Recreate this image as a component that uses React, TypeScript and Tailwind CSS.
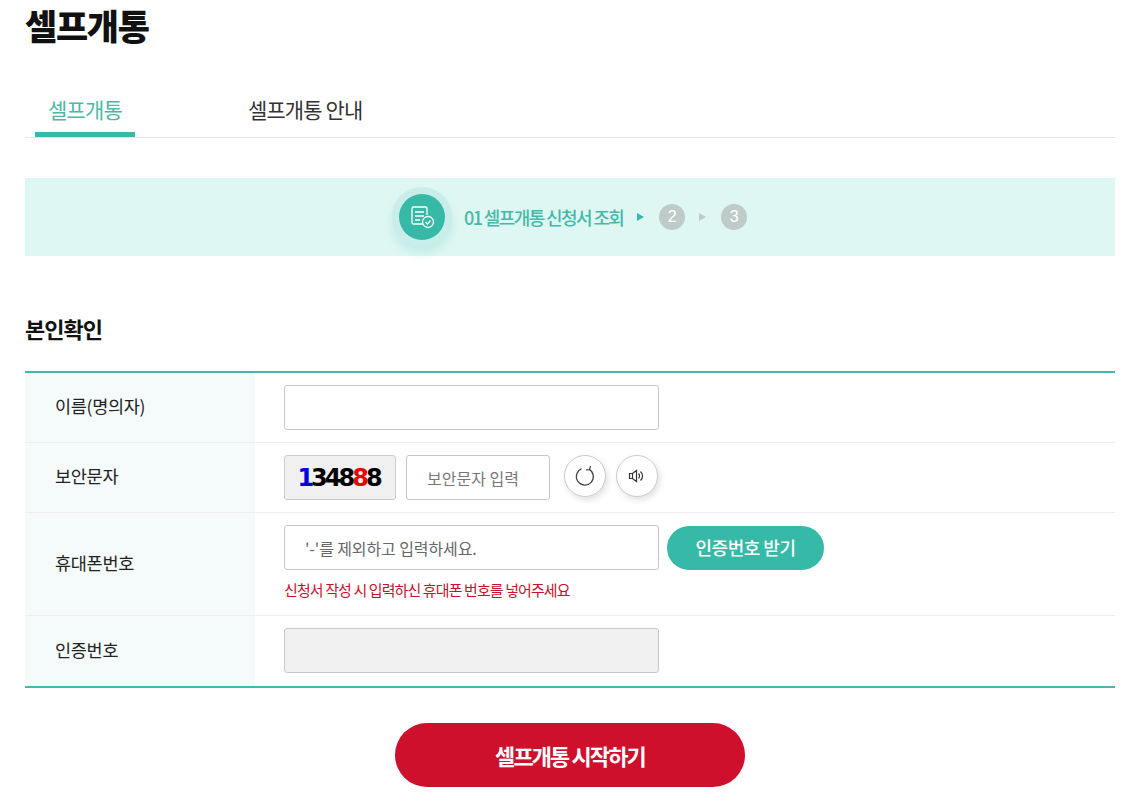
const font = { fontFamily: '"Noto Sans CJK KR", "Noto Sans", sans-serif' };

function Label({ text }: { text: string }) {
  return (
    <div className="w-[230px] shrink-0 bg-[#f5fbfa] pl-[30px] pb-[2px] flex items-center text-[17.5px] tracking-[-0.3px] text-[#222222]">
      {text}
    </div>
  );
}

function Row({ label, className = "", children }: { label: string; className?: string; children: React.ReactNode }) {
  return (
    <div className={`flex border-b border-[#eeeeee] ${className}`}>
      <Label text={label} />
      <div className="pl-[29px] pt-[12px] flex-1">{children}</div>
    </div>
  );
}

export default function App() {
  return (
    <div className="w-[1132px] h-[806px] overflow-hidden bg-white px-[25px] pr-[17px]" style={font}>
      <h1 className="h-[50px] text-[35px] leading-[50px] font-black tracking-[-1.3px] text-[#111111]">셀프개통</h1>

      {/* Tabs */}
      <div className="mt-[37px] h-[51px] flex border-b border-[#e5e5e5]">
        <div className="ml-[10px] w-[100px] h-[50px] border-b-[5px] border-[#36b9a6] text-center text-[21px] leading-[45px] tracking-[-0.8px] text-[#4cb8a6]">
          셀프개통
        </div>
        <div className="ml-[113px] text-[21px] leading-[45px] tracking-[-0.9px] text-[#333333]">셀프개통 안내</div>
      </div>

      {/* Steps */}
      <div className="mt-[40px] h-[78px] bg-[#dff7f3] flex items-center pl-[374px]">
        <div className="w-[46px] h-[46px] rounded-full bg-[#36b9a6] flex items-center justify-center shadow-[0_0_0_7px_#c9eee9,0_6px_10px_7px_rgba(54,185,166,0.18)]">
          <svg width="28" height="24" viewBox="0 0 28 24" fill="none" stroke="white" strokeWidth="1.3">
            <path d="M15 19H5.500A1.500 1.500 0 0 1 4 17.500V3.500A1.500 1.500 0 0 1 5.500 2h12A1.500 1.500 0 0 1 19 3.500V10" />
            <path d="M7 7h9M7 11h9M7 15h5" />
            <circle cx="20" cy="17" r="5.500" />
            <path d="M17.500 17l2 2 3-3.500" />
          </svg>
        </div>
        <span className="ml-[19px] text-[18px] font-medium tracking-[-1.6px] text-[#45b9a8]">01 셀프개통 신청서 조회</span>
        <div className="ml-[14px] w-0 h-0 border-y-[4px] border-y-transparent border-l-[7px] border-l-[#36b9a6]" />
        <div className="ml-[15px] w-[26px] h-[26px] rounded-full bg-[#bfcbc9] text-white text-[16px] flex items-center justify-center" style={{ fontFamily: '"Liberation Sans", sans-serif' }}>2</div>
        <div className="ml-[14px] w-0 h-0 border-y-[4px] border-y-transparent border-l-[7px] border-l-[#bfcbc9]" />
        <div className="ml-[15px] w-[26px] h-[26px] rounded-full bg-[#bfcbc9] text-white text-[16px] flex items-center justify-center" style={{ fontFamily: '"Liberation Sans", sans-serif' }}>3</div>
      </div>

      <h2 className="mt-[57px] h-[31px] text-[22px] leading-[30px] font-bold tracking-[-1px] text-[#111111]">본인확인</h2>

      {/* Form table */}
      <div className="mt-[27px] border-t-2 border-b-2 border-[#45b9a8]">
        <Row label="이름(명의자)" className="h-[70px]">
          <div className="w-[375px] h-[45px] bg-white border border-[#c8c8c8] rounded-[3px]" />
        </Row>
        <Row label="보안문자" className="h-[70px]">
          <div className="flex items-start">
            <div className="w-[112px] h-[45px] bg-[#f0f0f0] border border-[#cccccc] rounded-[3px] pr-[3px] flex items-center justify-center text-[24px] font-bold tracking-[-3px]" style={{ fontFamily: '"DejaVu Sans", sans-serif' }}>
              <span className="text-[#0000dd]">1</span>
              <span className="text-black">348</span>
              <span className="text-[#ee0000]">8</span>
              <span className="text-black">8</span>
            </div>
            <div className="ml-[10px] w-[144px] h-[45px] border border-[#c8c8c8] rounded-[3px] pl-[20px] flex items-center text-[16px] text-[#777777]">보안문자 입력</div>
            <div className="ml-[14px] w-[42px] h-[42px] rounded-full bg-white border border-[#cccccc] shadow-[2px_3px_6px_rgba(0,0,0,0.12)] flex items-center justify-center">
              <svg width="22" height="22" viewBox="0 0 22 22" fill="none" stroke="#444444" strokeWidth="1.200">
                <path d="M7.500 3.800A8.500 8.500 0 1 0 15.500 4.500" />
                <path d="M16.500 1 15.600 4.600 12 4.800" />
              </svg>
            </div>
            <div className="ml-[10px] w-[42px] h-[42px] rounded-full bg-white border border-[#cccccc] shadow-[2px_3px_6px_rgba(0,0,0,0.12)] flex items-center justify-center">
              <svg width="18" height="18" viewBox="0 0 18 18" fill="none" stroke="#333333" strokeWidth="1.200">
                <path d="M1.500 6.500h3L8.500 3.500v11L4.500 11.500h-3zM4.500 6.500v5" />
                <path d="M10.500 6.500a3.500 3.500 0 0 1 0 5M12.500 4.500a6 6 0 0 1 0 9" />
              </svg>
            </div>
          </div>
        </Row>
        <Row label="휴대폰번호" className="h-[103px]">
          <div className="flex items-center">
            <div className="w-[375px] h-[45px] border border-[#c8c8c8] rounded-[3px] pl-[20px] flex items-center text-[16px] tracking-[-0.1px] text-[#666666]">'-'를 제외하고 입력하세요.</div>
            <button className="ml-[8px] w-[157px] h-[44px] rounded-full bg-[#36b9a6] text-white text-[18px] font-medium tracking-[-0.5px]">인증번호 받기</button>
          </div>
          <p className="mt-[10px] text-[15px] leading-[20px] tracking-[-0.9px] text-[#c8102e]">신청서 작성 시 입력하신 휴대폰 번호를 넣어주세요</p>
        </Row>
        <div className="flex h-[70px]">
          <Label text="인증번호" />
          <div className="pl-[29px] pt-[12px]">
            <div className="w-[375px] h-[45px] bg-[#f0f0f0] border border-[#c8c8c8] rounded-[3px]" />
          </div>
        </div>
      </div>

      <div className="mt-[35px] flex justify-center">
        <button className="w-[350px] h-[64px] rounded-full bg-[#cf102d] text-white text-[22px] font-bold tracking-[-1.9px]">셀프개통 시작하기</button>
      </div>
    </div>
  );
}
